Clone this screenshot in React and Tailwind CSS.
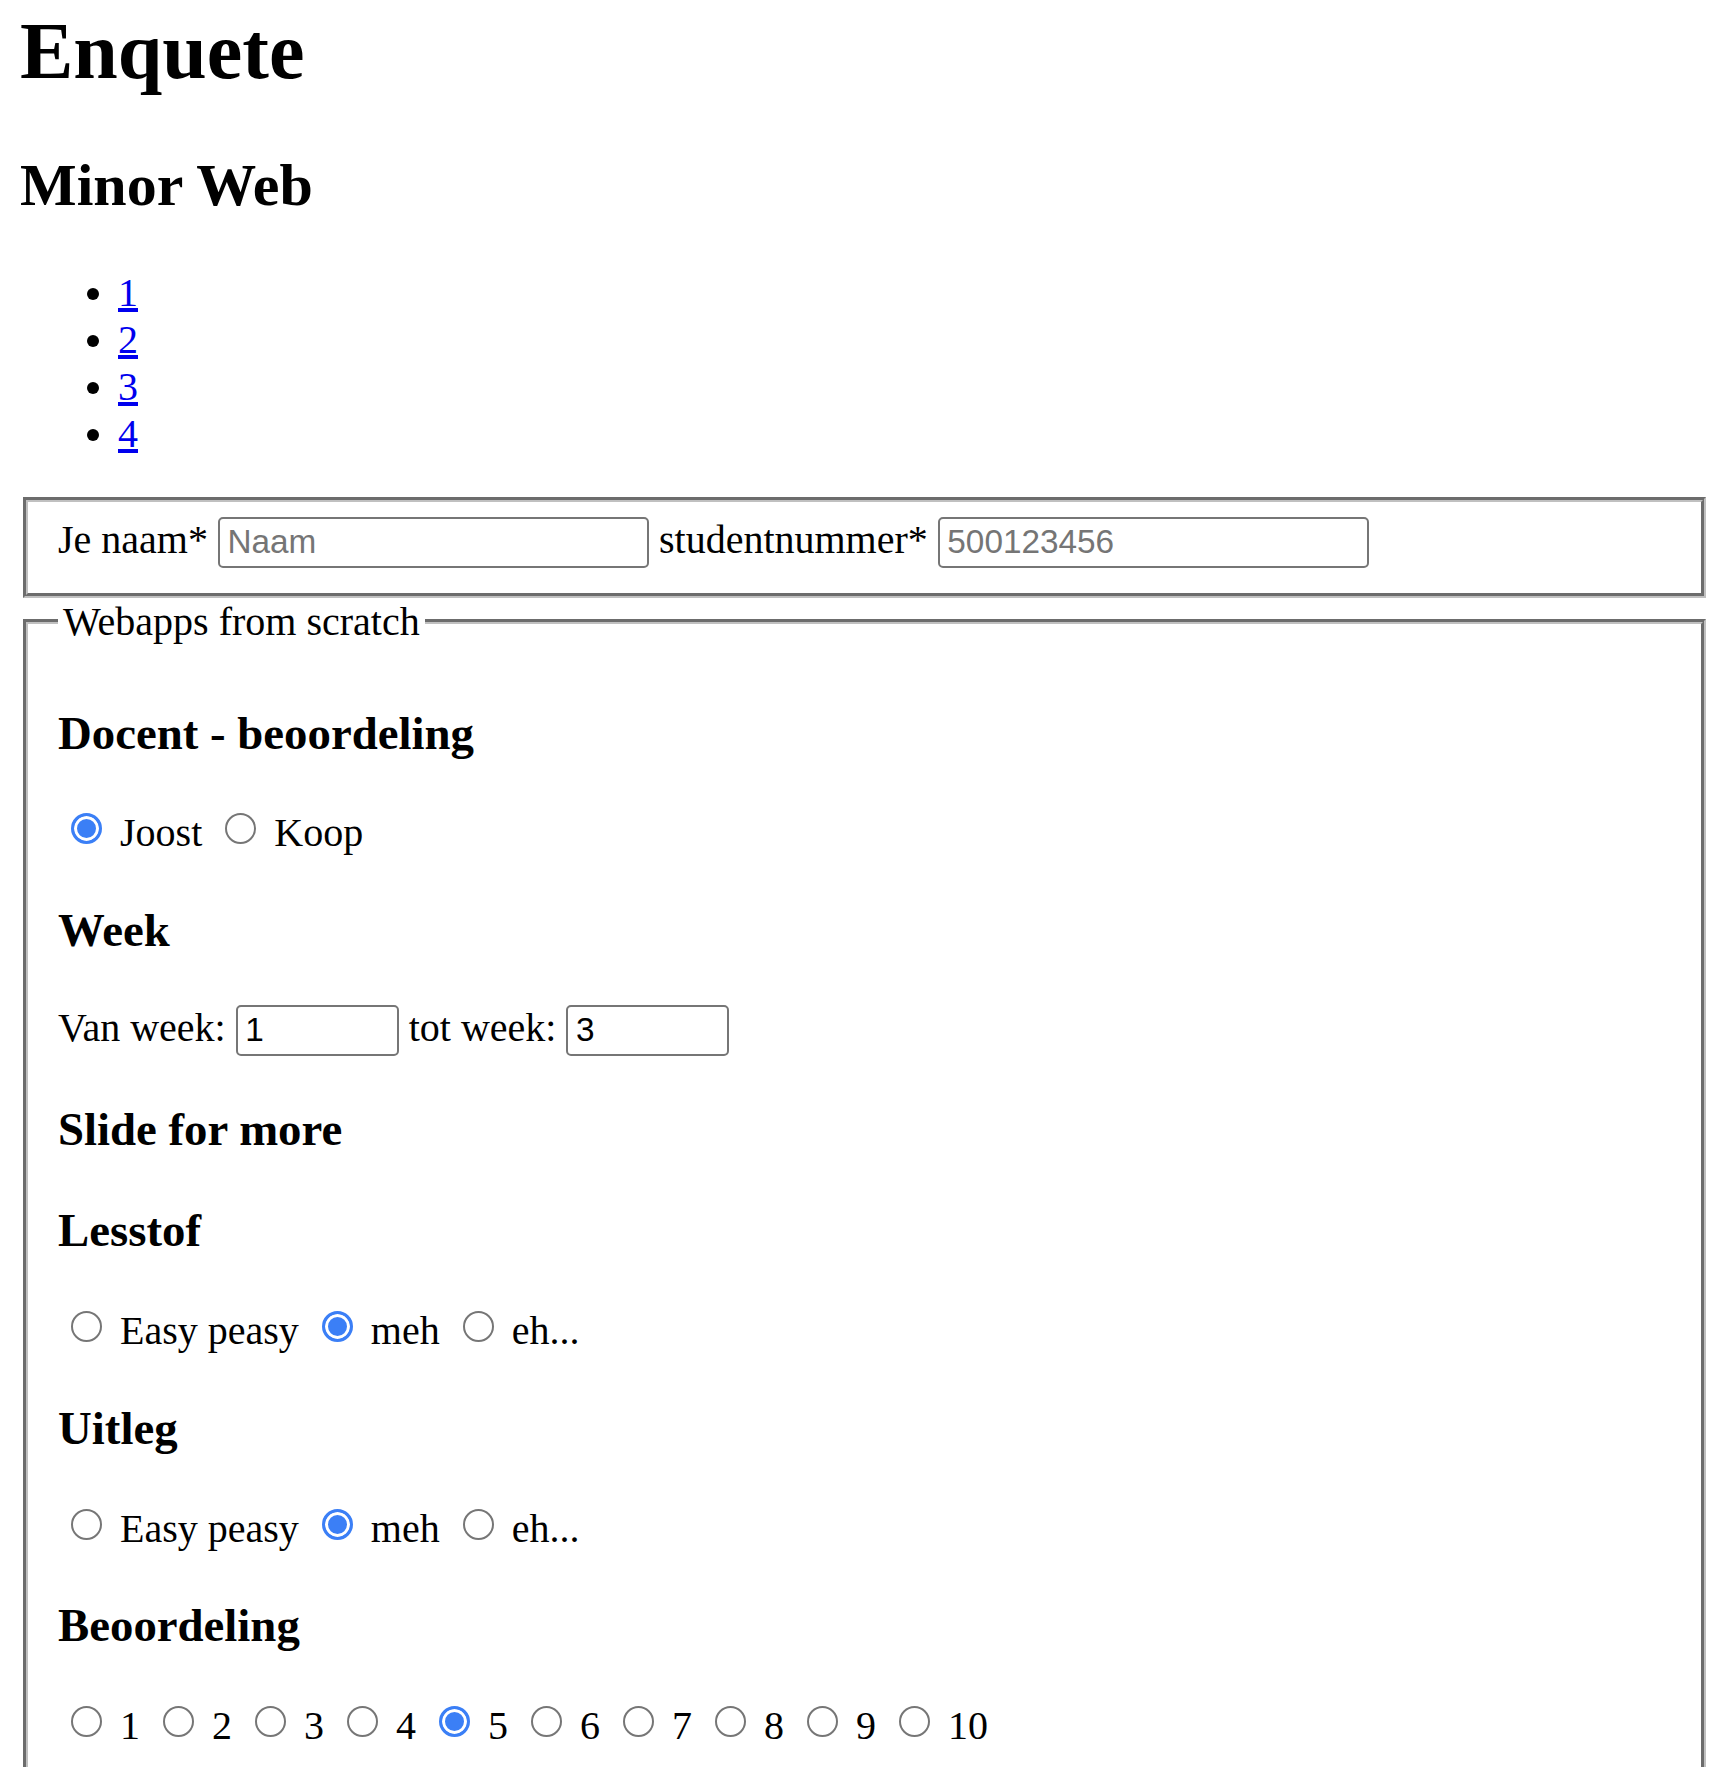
import { Fragment } from "react";

const inputBase =
  "inline-block h-[51px] px-[7.5px] border-[2.5px] border-[#767676] rounded-[5px] bg-white font-['Liberation_Sans',Arial,sans-serif] text-[33.33px] leading-[normal] text-black placeholder:text-[#757575] align-baseline outline-none";

const fieldsetCls =
  "ml-[3px] border-[5px] [--tw-border-style:groove] border-[#c0c0c0] pt-[14px] px-[30px] pb-[25px]";

const headingCls = "text-[46.8px] font-bold my-[46.8px] leading-[normal]";

function Radio({ name, checked }) {
  return (
    <input
      type="radio"
      name={name}
      defaultChecked={checked}
      className="appearance-none inline-block align-baseline w-[31px] h-[31px] ml-[13px] mr-[8px] mt-[7px] mb-[2px] rounded-full border-[2.5px] border-[#767676] bg-white checked:border-[3px] checked:border-[#3b7ff6] checked:bg-[#3b7ff6] checked:shadow-[inset_0_0_0_3px_#fff]"
    />
  );
}

function Choices({ name, options, selected }) {
  return (
    <div>
      {options.map((opt, idx) => (
        <Fragment key={`${name}-${opt}`}>
          <Radio name={name} checked={idx === selected} />{" "}
          <label>{opt}</label>{" "}
        </Fragment>
      ))}
    </div>
  );
}

export default function App() {
  const grades = ["1", "2", "3", "4", "5", "6", "7", "8", "9", "10"];
  return (
    <div className="min-h-screen bg-white pt-[6px] pl-[20px] pr-[16px] text-black font-['Liberation_Serif','Times_New_Roman',serif] text-[40px] leading-[normal]">
      <h1 className="text-[80px] font-bold mb-[53.6px]">Enquete</h1>
      <h2 className="text-[60px] font-bold mb-[49.8px]">Minor Web</h2>
      <ul className="list-disc pl-[98px] mb-[40px]">
        {["1", "2", "3", "4"].map((n) => (
          <li key={n}>
            <a href={`#${n}`} className="text-[#0000ee] underline">
              {n}
            </a>
          </li>
        ))}
      </ul>

      <fieldset className={fieldsetCls}>
        <label>Je naam*</label>{" "}
        <input type="text" placeholder="Naam" className={`${inputBase} w-[431px]`} />{" "}
        <label>studentnummer*</label>{" "}
        <input type="text" placeholder="500123456" className={`${inputBase} w-[431px]`} />
      </fieldset>

      <fieldset className={`${fieldsetCls} pb-[80px]`}>
        <legend className="px-[5px]">Webapps from scratch</legend>

        <h3 className={headingCls}>Docent - beoordeling</h3>
        <Choices name="docent" options={["Joost", "Koop"]} selected={0} />

        <h3 className={headingCls}>Week</h3>
        <div>
          <label>Van week:</label>{" "}
          <input type="text" defaultValue="1" className={`${inputBase} w-[163px]`} />{" "}
          <label>tot week:</label>{" "}
          <input type="text" defaultValue="3" className={`${inputBase} w-[163px]`} />
        </div>

        <h3 className={headingCls}>Slide for more</h3>

        <h3 className={headingCls}>Lesstof</h3>
        <Choices name="lesstof" options={["Easy peasy", "meh", "eh..."]} selected={1} />

        <h3 className={headingCls}>Uitleg</h3>
        <Choices name="uitleg" options={["Easy peasy", "meh", "eh..."]} selected={1} />

        <h3 className={headingCls}>Beoordeling</h3>
        <Choices name="cijfer" options={grades} selected={4} />
      </fieldset>
    </div>
  );
}
